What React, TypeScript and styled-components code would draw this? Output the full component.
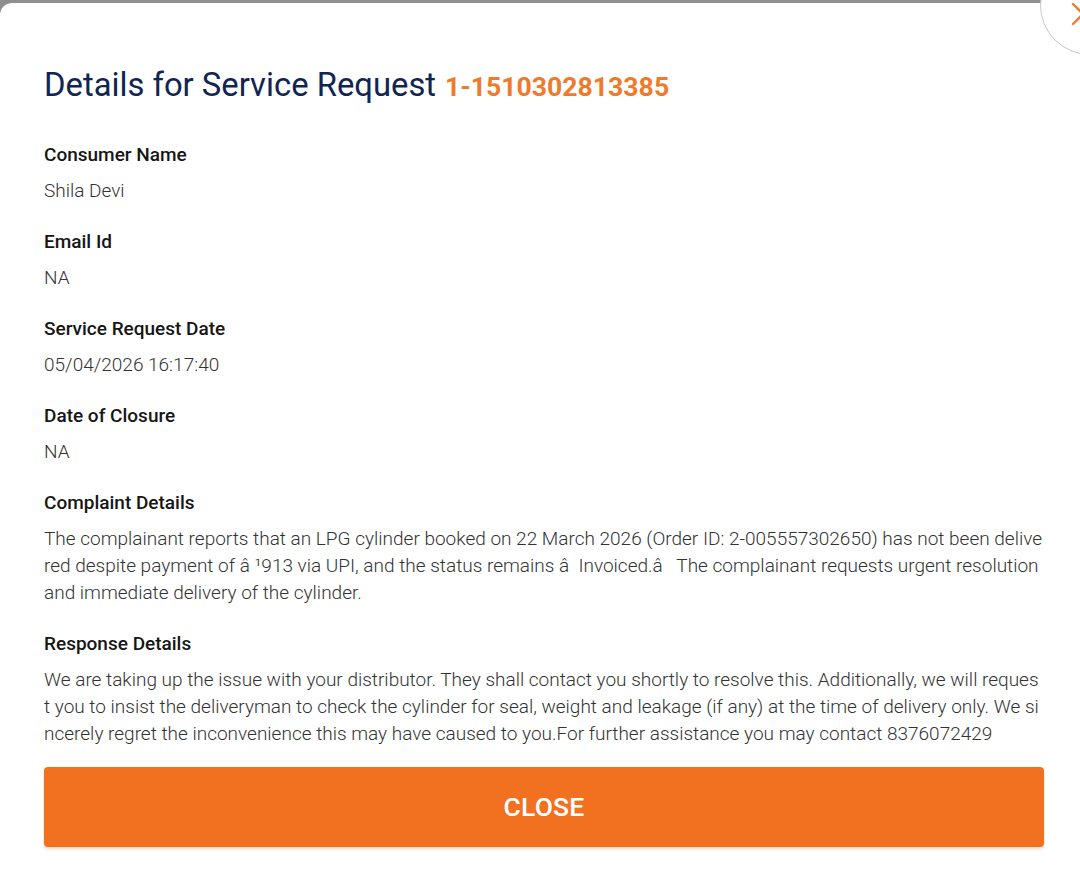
import React from "react";
import styled, { createGlobalStyle } from "styled-components";

const GlobalStyle = createGlobalStyle`
  html, body {
    margin: 0;
    padding: 0;
    height: 100%;
    overflow: hidden;
  }
  body {
    font-family: Roboto, "Noto Sans", Arial, sans-serif;
    background: #8f8f8f;
  }
  #root {
    height: 100%;
  }
`;

const Backdrop = styled.div`
  height: 100%;
  padding-top: 3px;
  box-sizing: border-box;
  position: relative;
  overflow: hidden;
`;

const Sheet = styled.div`
  position: relative;
  background: #ffffff;
  height: 100%;
  border-top-left-radius: 12px;
  padding: 63px 36px 0 44px;
  box-sizing: border-box;
`;

const CloseCircle = styled.button`
  position: absolute;
  top: -48px;
  right: -60px;
  width: 100px;
  height: 100px;
  border-radius: 50%;
  background: #ffffff;
  border: 1.5px solid #c8c8c8;
  padding: 0;
  cursor: pointer;
  svg {
    position: absolute;
    left: 30px;
    top: 46px;
  }
`;

const Title = styled.h1`
  margin: 0 0 36px;
  font-family: Roboto, sans-serif;
  font-weight: 400;
  font-size: 32.8px;
  line-height: 38px;
  color: #102552;
  display: flex;
  align-items: baseline;
  gap: 9px;
`;

const RequestNo = styled.span`
  font-weight: 700;
  font-size: 26.6px;
  color: #ef7a2c;
`;

const FieldList = styled.div`
  display: flex;
  flex-direction: column;
  gap: 25.5px;
`;

const Field = styled.section``;

const Label = styled.div`
  font-weight: 500;
  font-size: 19px;
  line-height: 26px;
  color: #161616;
  margin-bottom: 8.5px;
`;

const Value = styled.div`
  font-weight: 300;
  font-size: 19px;
  line-height: 27px;
  color: #333333;
  word-break: break-all;
  white-space: pre-wrap;
`;

const CloseButton = styled.button`
  display: block;
  width: 1000px;
  height: 80px;
  margin-top: 20px;
  border: none;
  border-radius: 4px;
  background: #f17121;
  color: #ffffff;
  font-family: Roboto, sans-serif;
  font-weight: 500;
  font-size: 26.5px;
  letter-spacing: 0.2px;
  box-shadow: 0 2px 3px rgba(240, 150, 80, 0.35);
  cursor: pointer;
`;

type Detail = { label: string; value: string };

const details: Detail[] = [
  { label: "Consumer Name", value: "Shila Devi" },
  { label: "Email Id", value: "NA" },
  { label: "Service Request Date", value: "05/04/2026 16:17:40" },
  { label: "Date of Closure", value: "NA" },
  {
    label: "Complaint Details",
    value:
      "The complainant reports that an LPG cylinder booked on 22 March 2026 (Order ID: 2-005557302650) has not been delivered despite payment of â ¹913 via UPI, and the status remains â  Invoiced.â   The complainant requests urgent resolution and immediate delivery of the cylinder.",
  },
  {
    label: "Response Details",
    value:
      "We are taking up the issue with your distributor. They shall contact you shortly to resolve this. Additionally, we will request you to insist the deliveryman to check the cylinder for seal, weight and leakage (if any) at the time of delivery only. We sincerely regret the inconvenience this may have caused to you.For further assistance you may contact 8376072429",
  },
];

export default function App() {
  return (
    <>
      <GlobalStyle />
      <Backdrop>
        <Sheet>
          <CloseCircle aria-label="Close">
            <svg width="24" height="24" viewBox="0 0 24 24">
              <path
                d="M2 2 L22 22 M22 2 L2 22"
                stroke="#ef7a2c"
                strokeWidth="2.4"
                strokeLinecap="round"
                fill="none"
              />
            </svg>
          </CloseCircle>
          <Title>
            Details for Service Request
            <RequestNo>1-1510302813385</RequestNo>
          </Title>
          <FieldList>
            {details.map((d) => (
              <Field key={d.label}>
                <Label>{d.label}</Label>
                <Value>{d.value}</Value>
              </Field>
            ))}
          </FieldList>
          <CloseButton>CLOSE</CloseButton>
        </Sheet>
      </Backdrop>
    </>
  );
}
